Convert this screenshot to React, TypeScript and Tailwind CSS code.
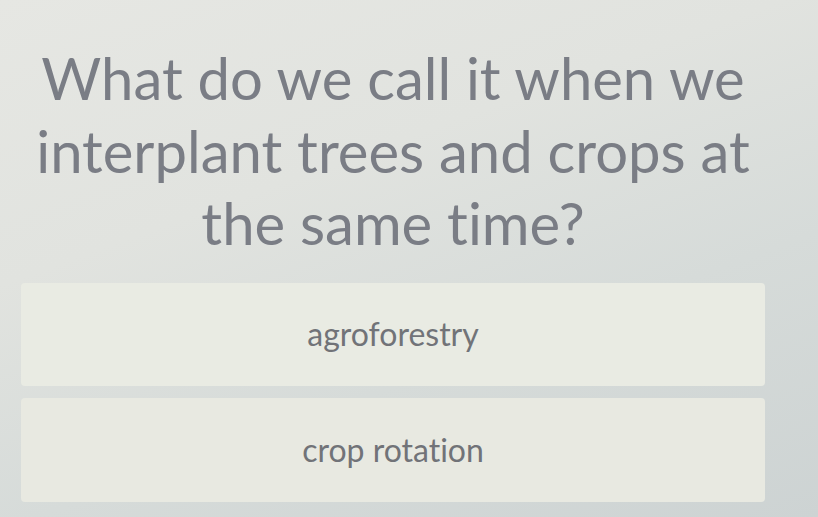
export default function App() {
  return (
    <div
      className="w-[818px] h-[517px] overflow-hidden flex flex-col bg-[linear-gradient(160deg,#e6e7e3_0%,#e1e3df_35%,#d6dbd9_65%,#cdd3d3_100%)] [font-variant-ligatures:none]"
      style={{ fontFamily: "Lato, 'Open Sans', sans-serif" }}
    >
      <div className="pt-[42px] pl-[21px] w-[765px] text-center text-[#7a7d85] text-[58px] leading-[72.5px]">
        <p>What do we call it when we</p>
        <p>interplant trees and crops at</p>
        <p>the same time?</p>
      </div>
      <div className="mt-[23px] pl-[21px] flex flex-col gap-[12px]">
        <div className="w-[744px] h-[103px] rounded-[4px] bg-[#e9ebe3] flex items-center justify-center text-[32px] text-[#717378]">
          agroforestry
        </div>
        <div className="w-[744px] h-[104px] rounded-[4px] bg-[#e8e9e1] flex items-center justify-center text-[32px] text-[#717378]">
          crop rotation
        </div>
      </div>
    </div>
  );
}
